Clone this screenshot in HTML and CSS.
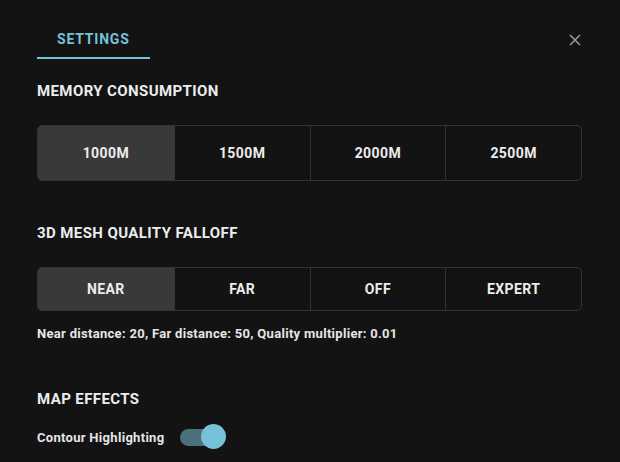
FILE: index.html
```html
<!DOCTYPE html>
<html>
<head>
<meta charset="utf-8">
<link rel="stylesheet" href="styles.css">
</head>
<body>
<div class="panel">
  <div class="header">
    <div class="tab">SETTINGS</div>
    <button class="close" aria-label="Close">
      <svg width="12" height="12" viewBox="0 0 12 12"><path d="M1 1L11 11M11 1L1 11" stroke="#9a9a9a" stroke-width="1.5" fill="none"/></svg>
    </button>
  </div>

  <h2 class="title t-mem">MEMORY CONSUMPTION</h2>
  <div class="seg seg-tall">
    <div class="opt active">1000M</div>
    <div class="opt">1500M</div>
    <div class="opt">2000M</div>
    <div class="opt">2500M</div>
  </div>

  <h2 class="title t-mesh">3D MESH QUALITY FALLOFF</h2>
  <div class="seg seg-short">
    <div class="opt active">NEAR</div>
    <div class="opt">FAR</div>
    <div class="opt">OFF</div>
    <div class="opt">EXPERT</div>
  </div>
  <p class="desc">Near distance: 20, Far distance: 50, Quality multiplier: 0.01</p>

  <h2 class="title t-map">MAP EFFECTS</h2>
  <div class="toggle-row">
    <span class="label">Contour Highlighting</span>
    <span class="toggle"><span class="track"></span><span class="thumb"></span></span>
  </div>
</div>
</body>
</html>
```
FILE: styles.css
```css
html, body {
  margin: 0;
  background: #131313;
  height: 100%;
}
body {
  font-family: Roboto, "Liberation Sans", sans-serif;
  color: #ececec;
  overflow: hidden;
}
.panel {
  padding: 0 38px 0 37px;
}
.header {
  display: flex;
  justify-content: space-between;
  align-items: flex-start;
  height: 59px;
}
.tab {
  margin-top: 30px;
  padding: 0 20px;
  height: 27px;
  border-bottom: 2px solid #76c2d9;
  color: #76c2d9;
  font-weight: 700;
  font-size: 14px;
  letter-spacing: 0.8px;
  line-height: 18px;
}
.close {
  margin-top: 33px;
  margin-right: 0;
  background: none;
  border: 0;
  padding: 0;
  width: 14px;
  height: 14px;
  display: flex;
  align-items: center;
  justify-content: center;
}
.title {
  margin: 0;
  font-size: 15px;
  font-weight: 700;
  line-height: 20px;
  letter-spacing: 0.4px;
}
.t-mem { margin-top: 22px; }
.t-mesh { margin-top: 42px; }
.t-map { margin-top: 46px; }
.seg {
  display: grid;
  grid-template-columns: repeat(4, 1fr);
  border: 1px solid #333;
  border-radius: 5px;
  overflow: hidden;
}
.seg-tall { margin-top: 24px; height: 54px; }
.seg-short { margin-top: 24px; height: 42px; }
.opt {
  display: flex;
  align-items: center;
  justify-content: center;
  font-size: 14px;
  font-weight: 700;
  letter-spacing: 0.4px;
  border-left: 1px solid #333;
}
.opt:first-child { border-left: 0; }
.opt.active { background: #393939; }
.desc {
  margin: 14px 0 0;
  font-size: 13px;
  font-weight: 700;
  line-height: 18px;
  letter-spacing: 0.3px;
  color: #e6e6e6;
}
.toggle-row {
  margin-top: 15px;
  display: flex;
  align-items: center;
  gap: 16px;
}
.label {
  font-size: 13px;
  font-weight: 700;
  letter-spacing: 0.3px;
  color: #e6e6e6;
}
.toggle {
  position: relative;
  width: 46px;
  height: 26px;
  display: inline-block;
}
.track {
  position: absolute;
  left: 0;
  top: 5px;
  width: 40px;
  height: 17px;
  border-radius: 9px;
  background: #4a7079;
}
.thumb {
  position: absolute;
  left: 21px;
  top: 0;
  width: 25px;
  height: 25px;
  border-radius: 50%;
  background: #77c2d9;
}
```
